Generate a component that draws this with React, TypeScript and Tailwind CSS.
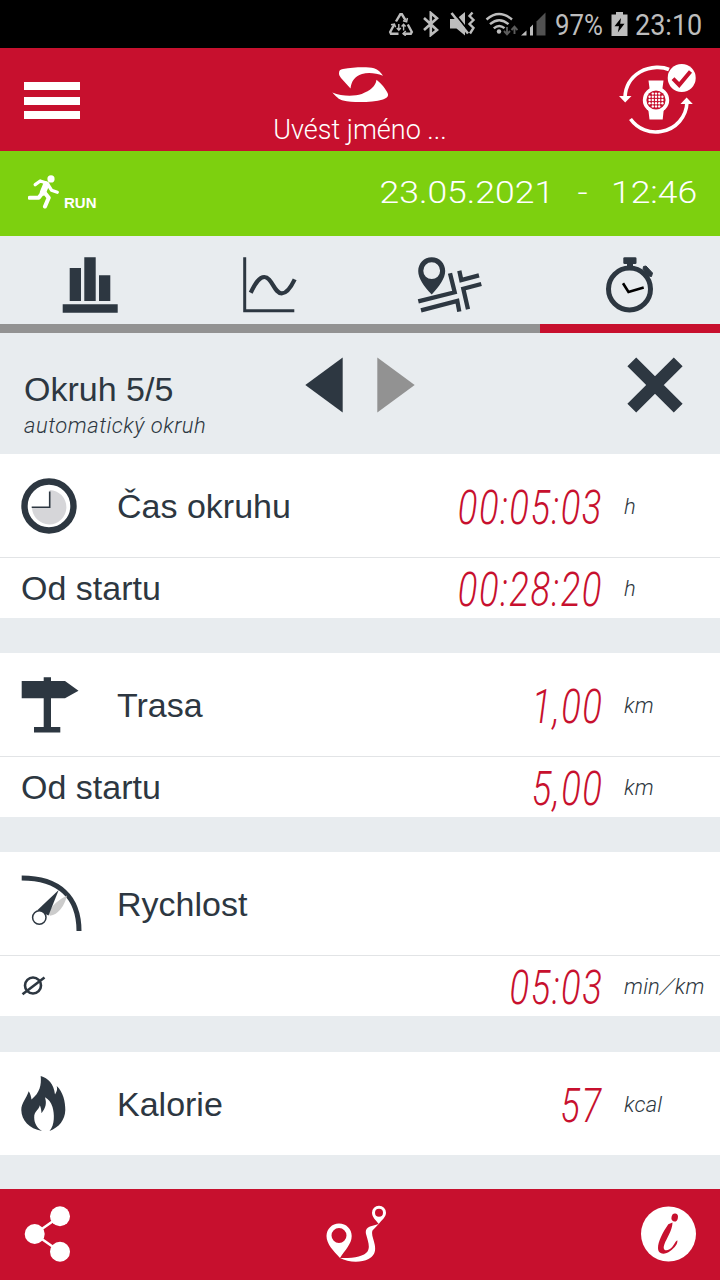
import type { ReactNode } from "react";
import { clsx } from "clsx";

type IconProps = { className?: string };

function RecycleIcon() {
  return (
    <svg viewBox="0 0 26 24" className="h-6 w-[26px]" fill="none" stroke="currentColor" strokeWidth="2.4">
      <path d="M8 9.500 12.300 2.300h1.600L17.800 8.700" />
      <path d="m15 8.800 3.600 1 .8-3.800" strokeWidth="1.500" />
      <path d="M6.200 12.500 2.200 20l.8 1.700h7.500" />
      <path d="m3 12.700 3.400-.6 1.200 3.200" strokeWidth="1.500" />
      <path d="M15.500 21.700h7.300l1-1.700-4-7.500" />
      <path d="m17.800 19-2.700 2.700 2.700 2" strokeWidth="1.500" />
      <path d="M10.800 12v6m-2-2 2 2.200 2-2.200M15.600 18.500v-6m-2 2 2-2.200 2 2.200" strokeWidth="1.400" />
    </svg>
  );
}

function BluetoothIcon() {
  return (
    <svg viewBox="0 0 18 26" className="h-[26px] w-[18px]" fill="none" stroke="currentColor" strokeWidth="2.6">
      <path d="m2 7 13 12-6.200 5V2L15 7.300 2 19" />
    </svg>
  );
}

function MuteIcon() {
  return (
    <svg viewBox="0 0 27 26" className="h-[26px] w-[27px]">
      <path d="M1 8h6.500L16 1v23.500L7.500 17.500H1z" fill="currentColor" />
      <path d="M4.500 1 20 20.500" stroke="#000" strokeWidth="2" />
      <path d="M2.500 2 19 22.500" stroke="currentColor" strokeWidth="2.600" />
      <path d="m23.500 1.500-3 3.500 4 4-4 4 4 4-3.500 5.500" fill="none" stroke="currentColor" strokeWidth="2.400" />
    </svg>
  );
}

function WifiIcon() {
  return (
    <svg viewBox="0 0 33 25" className="h-[25px] w-[33px]" fill="none" stroke="currentColor" strokeWidth="2.4">
      <path d="M1.5 7.5Q14 -3.5 27 7.5M5 12.2Q14.200 4.200 23.500 12.200M8.800 16.400Q14 11.500 19.500 16.200" />
      <circle cx="14" cy="19.500" r="2.200" fill="currentColor" stroke="none" />
      <path d="M22 15v7m-3-3 3 3.300 3-3.300M29.500 22v-7m-3 3 3-3.300 3 3.300" stroke="#5c5c5c" strokeWidth="1.900" />
    </svg>
  );
}

function SignalIcon() {
  return (
    <svg viewBox="0 0 26 24" className="h-6 w-[26px]">
      <path d="M0 23.500 5.500 18.500v5zM9 15.500l3-3v11H9z" fill="currentColor" />
      <path d="M15.500 9.500 24.500.5v23h-9z" fill="#515151" />
    </svg>
  );
}

function BatteryIcon() {
  return (
    <svg viewBox="0 0 17 24" className="h-6 w-[17px]">
      <path d="M5 0h7v2.500h4.500V24H.5V2.500H5z" fill="currentColor" />
      <path d="M10 6 3.500 14.200H8L6.800 20.500l6.700-8.700H9.200z" fill="#000" />
    </svg>
  );
}

function BrandMark() {
  return (
    <svg viewBox="0 0 57 37" className="h-[37px] w-[57px]" fill="currentColor">
      <path d="M7 7.300C7 4.500 8 3.600 11 3 22 .9 36 .7 42 2.200 46 3.400 49 6.500 51 9.800 44 7 36 6.300 30 8 22.500 10.500 19.500 15 18.500 22.500L9 12C7.500 10 7 9 7 7.300z" />
      <path d="M.3 26.500C10 30.500 22 30.500 29.700 28 38.500 24.500 43.500 20.500 44.500 13.800 49 17.500 54 23 56 28 56.500 31 54 32.500 51 33.400 40 36.500 22 37 11 34.500 6.500 33.500 3.500 29.800.3 26.500z" />
    </svg>
  );
}

function WatchSyncIcon() {
  const dots = [-6.400, -3.200, 0, 3.200, 6.400];
  return (
    <svg viewBox="0 0 80 74" className="h-[74px] w-20" fill="none">
      <path d="M51 6.500C45 3.700 33 2.800 22 9 12 15 7.500 24 7 34M12.500 56C20 66.500 32 70.500 43 68.500 58 66 68.500 54 69 39" stroke="currentColor" strokeWidth="3.600" />
      <path d="M1 33h12.500L7.200 39.500zM62.500 41h12.300L68.600 34.500z" fill="currentColor" />
      <path d="M30.500 17.500h15L44 29H32zM31.500 56.500h13.200L46 44H30z" fill="currentColor" />
      <circle cx="38" cy="37" r="13.200" fill="currentColor" />
      <circle cx="38" cy="37" r="9.600" fill="#c7102e" />
      {dots.map((x) =>
        dots
          .filter((y) => Math.hypot(x, y) < 8)
          .map((y) => <circle key={`${x}:${y}`} cx={38 + x} cy={37 + y} r="1.200" fill="currentColor" />)
      )}
      <circle cx="63.700" cy="15" r="14" fill="currentColor" />
      <path d="m55 15.700 6.200 6.300L72.500 8.500" stroke="#c7102e" strokeWidth="4" />
    </svg>
  );
}

function RunnerIcon() {
  return (
    <svg viewBox="0 0 32 34" className="h-[34px] w-8" fill="none" stroke="currentColor" strokeLinecap="round" strokeLinejoin="round">
      <circle cx="23" cy="3.900" r="3.600" fill="currentColor" stroke="none" />
      <path d="m18.200 9.500-3.300 8" strokeWidth="6.200" />
      <path d="m7.200 9.700 5-3.700 7 2.300 4.300 6.900 5.800 2" strokeWidth="3.300" />
      <path d="m16.500 17.500 4.200 5.200-3.700 8.800M14 18.500l-3.300 4.300H1.800" strokeWidth="4.100" />
    </svg>
  );
}

function BarsIcon() {
  return (
    <svg viewBox="0 0 56 56" className="size-14" fill="currentColor">
      <path d="M7.700 11H19v33H7.700zM22.300.3h11.400V44H22.300zM37 18.300h11.300V44H37zM.7 47.300h55v8.400H.7z" />
    </svg>
  );
}

function ChartIcon() {
  return (
    <svg viewBox="0 0 54 56" className="h-14 w-[54px]" fill="none" stroke="currentColor">
      <path d="M1.700.3v53.400h49.600" strokeWidth="3" />
      <path d="M7.700 35.700C12 27 16 20 21.300 20 29 20 31 36.300 38.700 36.300c5.800 0 9.800-7.300 13-14" strokeWidth="4.200" />
    </svg>
  );
}

function MapIcon() {
  return (
    <svg viewBox="0 0 66 56" className="h-14 w-[66px]">
      <path
        d="M14.700.3C22.500.3 28.200 6.500 28.200 14c0 7.500-6 15.500-13.500 23.500C7 29.500 1.200 21.500 1.200 14 1.200 6.500 7 .3 14.700.3zm0 5a8.400 8.400 0 1 0 0 16.800 8.400 8.400 0 0 0 0-16.800z"
        fill="currentColor"
        fillRule="evenodd"
      />
      <path
        d="m1.300 44.300 36.400-9L33 16.300M4 53.300l36.300-9.300 2 10.700M42.300 13.700l2 9.300L62 18.300M64.300 27l-18 4.700L51 52.300"
        fill="none"
        stroke="currentColor"
        strokeWidth="4.300"
      />
    </svg>
  );
}

function StopwatchIcon() {
  return (
    <svg viewBox="0 0 50 56" className="h-14 w-[50px]" fill="none">
      <rect x="18.300" y=".3" width="13.200" height="6.700" rx="1.300" fill="currentColor" />
      <path d="M22 6h6v4.500h-6z" fill="currentColor" />
      <circle cx="24.500" cy="32" r="21" stroke="currentColor" strokeWidth="5" />
      <path d="m38.500 9.500 2.500-.5 6.500 7-1 3.500-3-.5-5.500-6.500z" fill="currentColor" stroke="currentColor" strokeLinejoin="round" />
      <path d="m18 26.300 5.500 8.700 15.200-4.500" stroke="#000" strokeWidth="2.600" />
    </svg>
  );
}

function ClockIcon() {
  return (
    <svg viewBox="0 0 56 56" className="size-14" fill="none">
      <circle cx="28" cy="28" r="24.500" stroke="currentColor" strokeWidth="6.400" />
      <path d="M28.700 29.300V12A17.200 17.200 0 1 1 11 29.300z" fill="#d6d6d9" />
      <path d="M28.700 13.500v15.700h-18" stroke="currentColor" strokeWidth="1.600" />
    </svg>
  );
}

function SignpostIcon() {
  return (
    <svg viewBox="0 0 58 56" className="h-14 w-[58px]" fill="currentColor">
      <path d="M22.700.3H30V4h14l13.500 9.700L44 21.300H30V50h9.300v5.500H13V50h9.700V21.300H.7V4h22z" />
    </svg>
  );
}

function SpeedIcon() {
  return (
    <svg viewBox="0 0 62 58" className="h-[58px] w-[62px]" fill="none">
      <path d="M.7 3C38 3 58 22 58 56" stroke="currentColor" strokeWidth="5" />
      <path d="M46 20.500C44 30 37 40 29 40.800L27 38C31 30 39 24 46 20.500z" fill="#ccc" />
      <path d="M37.700 15 16.300 35.300 27.500 40.500z" fill="currentColor" />
      <circle cx="18.300" cy="42.500" r="6.700" fill="#fff" stroke="currentColor" strokeWidth="1.500" />
    </svg>
  );
}

function FlameIcon() {
  return (
    <svg viewBox="0 0 45 55" className="h-[55px] w-[45px]" fill="currentColor">
      <path d="M19.700 0C27 2 33 8 34 18.500 36.200 15 36.500 12.500 35.700 10 42 15.500 44.500 26 44.300 34 44 44 38 51.500 28.500 54.900 34 49 33.500 38 31.500 31 30 26 27.500 23.500 24 21.300 26 28 24.500 32 20.500 37.200 20.300 34 20 32 18.900 29.300 18 34 13 35 13.200 41.500 13.300 47.500 16 52 21 54.900 8 53 .5 44 .3 34 .2 27 5.500 22.500 7.700 15.200 9.500 18 10 20 10.500 23.500 19 16.500 20.500 9 19.700 0z" />
    </svg>
  );
}

function AverageIcon() {
  return (
    <svg viewBox="0 0 25 20" className="h-5 w-[25px]" fill="none" stroke="currentColor">
      <circle cx="12" cy="9.500" r="8" strokeWidth="2.600" />
      <path d="m1.500 18.200 22-16.700" strokeWidth="2.600" />
    </svg>
  );
}

function ShareIcon() {
  return (
    <svg viewBox="0 0 47 56" className="h-14 w-[47px]" fill="currentColor">
      <path d="M36 10.300 10.700 28 36 45.700" fill="none" stroke="currentColor" strokeWidth="2.500" />
      <circle cx="36" cy="10.300" r="10" />
      <circle cx="10.700" cy="28" r="10" />
      <circle cx="36" cy="45.700" r="10" />
    </svg>
  );
}

function RouteIcon() {
  return (
    <svg viewBox="0 0 61 57" className="h-[57px] w-[61px]" fill="currentColor" fillRule="evenodd">
      <path d="M13 18.500c7.200 0 12.700 5.500 12.700 12.500 0 8-6.700 14-11.700 22C7.500 46 .5 39 .5 31 .5 24 6 18.500 13 18.500zm0 4.500a7.500 7.500 0 1 0 0 15 7.500 7.500 0 0 0 0-15z" />
      <path d="M53 .8a6.900 6.900 0 0 1 7 7c0 4.200-4 7.200-7.300 11.200C49.500 15 46 12 46 7.800a6.900 6.900 0 0 1 7-7zM53 3.700a4 4 0 1 0 0 8 4 4 0 0 0 0-8z" />
      <path d="M14 53c8 4.500 21 5 28.500 1 6-3.200 7.500-8 6.200-14.500-.9-5-3.700-10-2.200-14L52.700 19 44 21.600c-4 1.400-5 4.400-3.700 8.400 1.700 6 4 12 1.200 16.500C38 51.500 27 53.500 14 53z" />
    </svg>
  );
}

function InfoIcon() {
  return (
    <svg viewBox="0 0 56 56" className="size-14">
      <circle cx="27.500" cy="28" r="27.500" fill="currentColor" />
      <g fill="#c7102e">
        <ellipse cx="33.700" cy="11.500" rx="3.200" ry="4" transform="rotate(12 33.700 11.500)" />
        <path d="M31.500 16.500 27.300 18.300C21.500 26.500 17 36 17 42c0 6.500 6.500 7.200 12.200 3C34 41.500 37 37.500 36.300 34.200 33.800 35.500 33 40.500 28.500 43.300 24 46 21.300 43.300 23.500 38 25.500 32.500 31.500 24 31.500 16.500z" />
      </g>
    </svg>
  );
}

function Triangle({ className }: IconProps) {
  return (
    <svg viewBox="0 0 38 56" className={clsx("h-14 w-[38px]", className)} fill="currentColor">
      <path d="M37.700.5v55L.3 28z" />
    </svg>
  );
}

function CloseIcon() {
  return (
    <svg viewBox="0 0 56 56" className="size-14" stroke="currentColor" strokeWidth="12.500">
      <path d="m4.800 4.800 46.400 46.400M51.200 4.800 4.800 51.200" />
    </svg>
  );
}

type RowProps = {
  icon?: ReactNode;
  label?: string;
  value?: string;
  unit?: ReactNode;
  small?: boolean;
};

function Row({ icon, label, value, unit, small }: RowProps) {
  return (
    <div className={clsx("box-content flex items-center bg-white", small ? "h-[60px]" : "h-[103px]")}>
      {icon && <div className={clsx("ml-[21px] shrink-0", !small && "w-[75px]")}>{icon}</div>}
      {label && <span className="ml-[21px] text-[34px] leading-none">{label}</span>}
      <span className="-mr-0.5 ml-auto origin-right scale-x-[0.76] pt-1 font-['Roboto'] text-[48px] leading-none font-light tracking-[2px] whitespace-nowrap text-[#c7102e] italic">
        {value}
      </span>
      <span className="ml-[23px] w-24 shrink-0 pt-0.5 font-['Roboto'] text-[22px] leading-none font-light tracking-[0.2px] whitespace-nowrap italic">
        {unit}
      </span>
    </div>
  );
}

function Card({ children }: { children: ReactNode }) {
  return <section className="divide-y divide-[#e2e4e6]">{children}</section>;
}

const tabs = [
  { name: "summary", icon: <BarsIcon /> },
  { name: "chart", icon: <ChartIcon /> },
  { name: "map", icon: <MapIcon /> },
  { name: "laps", icon: <StopwatchIcon /> }
];

export default function App() {
  const activeTab = "laps";

  return (
    <main className="flex h-[1280px] w-[720px] flex-col overflow-hidden bg-[#e8ecef] font-['Liberation_Sans',sans-serif] text-[#2d3741]">
      <div className="flex h-12 items-center bg-black pl-[388px] text-[#bdbdbd]">
        <RecycleIcon />
        <div className="ml-2">
          <BluetoothIcon />
        </div>
        <div className="ml-[9px]">
          <MuteIcon />
        </div>
        <div className="ml-[9px]">
          <WifiIcon />
        </div>
        <div className="ml-[3px]">
          <SignalIcon />
        </div>
        <span className="ml-2 w-[49px] origin-left scale-x-[0.86] pt-0.5 font-['Roboto'] text-[30px] leading-none">97%</span>
        <div className="ml-[7px]">
          <BatteryIcon />
        </div>
        <span className="ml-[7px] origin-left scale-x-[0.9] pt-0.5 font-['Roboto'] text-[30px] leading-none">23:10</span>
      </div>

      <header className="grid h-[103px] grid-cols-3 bg-[#c7102e] text-white">
        <button className="mt-[34px] ml-6 flex h-[37px] w-14 flex-col justify-between" aria-label="Menu">
          <span className="h-2 w-full bg-white" />
          <span className="h-2 w-full bg-white" />
          <span className="h-2 w-full bg-white" />
        </button>
        <div className="flex flex-col items-center pt-[18px]">
          <BrandMark />
          <span className="mt-[14px] font-['Roboto'] text-[27px] leading-none font-light whitespace-nowrap">Uvést jméno ...</span>
        </div>
        <div className="justify-self-end pt-[15px] pr-[22px]">
          <WatchSyncIcon />
        </div>
      </header>

      <div className="flex h-[85px] items-center bg-[#7dd00f] pl-7 text-white">
        <div className="pb-1">
          <RunnerIcon />
        </div>
        <span className="mt-[17px] ml-1 text-[15px] leading-none font-bold">RUN</span>
        <div className="mr-[23px] ml-auto flex origin-right scale-x-[1.11] gap-[21px] pb-[3px] font-['Roboto'] text-[32px] leading-none font-light">
          <span>23.05.2021</span>
          <span>-</span>
          <span>12:46</span>
        </div>
      </div>

      <nav className="grid h-[97px] grid-cols-4">
        {tabs.map((tab) => (
          <button
            key={tab.name}
            aria-label={tab.name}
            className={clsx(
              "flex justify-center border-b-9 pt-[21px]",
              tab.name === activeTab ? "border-[#c7102e]" : "border-[#929292]"
            )}
          >
            {tab.icon}
          </button>
        ))}
      </nav>

      <div className="flex h-[121px] items-start pr-[37px] pl-6">
        <div className="w-[281px] pt-[39px]">
          <h1 className="text-[34px] leading-none">Okruh 5/5</h1>
          <p className="mt-[9px] font-['Roboto'] text-[22px] leading-none font-light tracking-[0.5px] italic">automatický okruh</p>
        </div>
        <div className="flex gap-[34px] pt-6">
          <Triangle />
          <Triangle className="rotate-180 text-[#929292]" />
        </div>
        <div className="ml-auto pt-6">
          <CloseIcon />
        </div>
      </div>

      <div className="flex flex-col gap-[35px]">
        <Card>
          <Row icon={<ClockIcon />} label="Čas okruhu" value="00:05:03" unit="h" />
          <Row small label="Od startu" value="00:28:20" unit="h" />
        </Card>
        <Card>
          <Row icon={<SignpostIcon />} label="Trasa" value="1,00" unit="km" />
          <Row small label="Od startu" value="5,00" unit="km" />
        </Card>
        <Card>
          <Row icon={<SpeedIcon />} label="Rychlost" />
          <Row
            small
            icon={<AverageIcon />}
            value="05:03"
            unit={
              <>
                min<span className="mx-[3px] inline-block -skew-x-[22deg]">/</span>km
              </>
            }
          />
        </Card>
        <div className="pt-px">
          <Card>
            <Row icon={<FlameIcon />} label="Kalorie" value="57" unit="kcal" />
          </Card>
        </div>
      </div>

      <footer className="mt-auto flex h-[91px] items-center justify-between bg-[#c7102e] pr-[23px] pb-0.5 pl-6 text-white">
        <ShareIcon />
        <RouteIcon />
        <InfoIcon />
      </footer>
    </main>
  );
}
